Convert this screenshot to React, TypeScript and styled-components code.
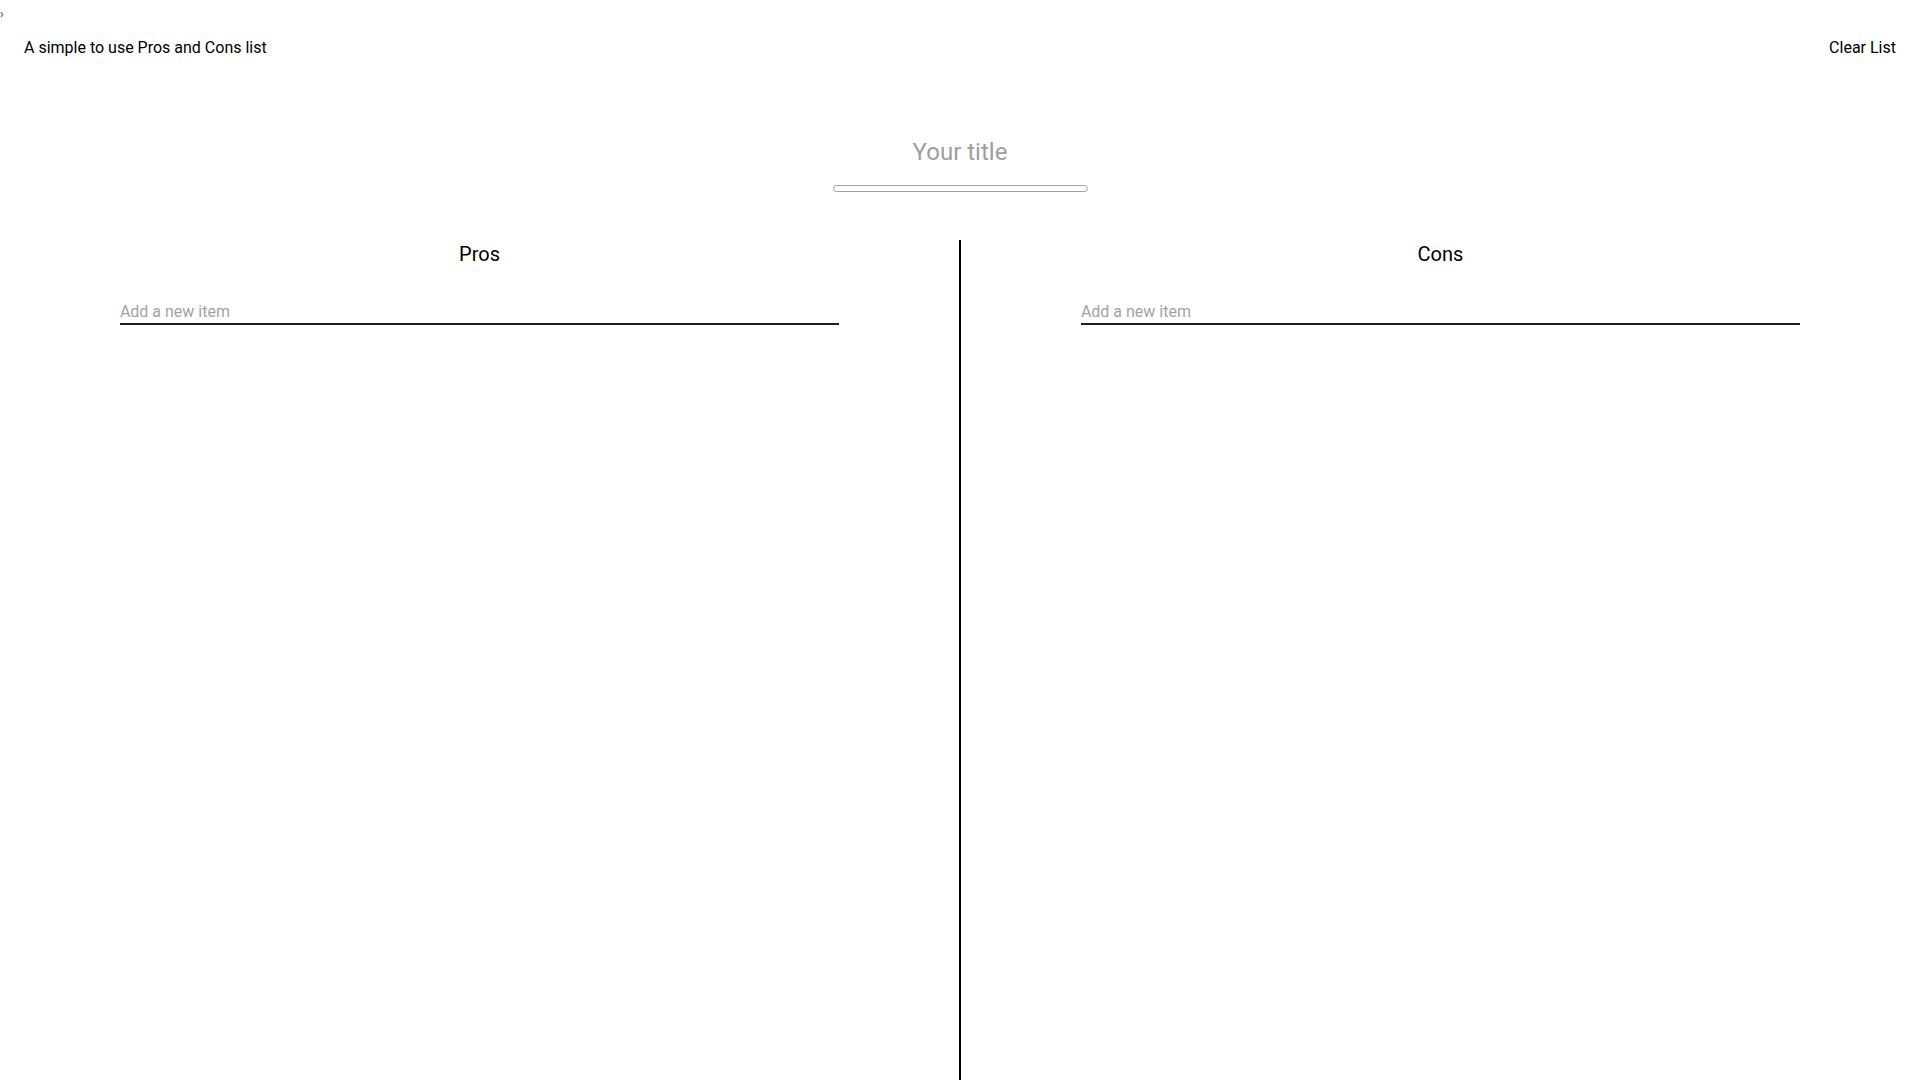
import React, { useState } from "react";
import styled, { createGlobalStyle } from "styled-components";

const GlobalStyle = createGlobalStyle`
  html, body {
    margin: 0;
    padding: 0;
    background: #ffffff;
    font-family: Roboto, "Liberation Sans", Arial, sans-serif;
    color: #000000;
  }
  * {
    box-sizing: border-box;
  }
`;

const Page = styled.div`
  display: flex;
  flex-direction: column;
  min-height: 100vh;
  overflow: hidden;
`;

const Chevron = styled.span`
  display: block;
  height: 16px;
  font-size: 12px;
  line-height: 28px;
  color: #333;
`;

const Header = styled.header`
  display: flex;
  justify-content: space-between;
  align-items: center;
  margin-top: 22px;
  padding: 0 24px;
  font-size: 16px;
  line-height: 20px;
`;

const HeaderButton = styled.button`
  border: none;
  background: none;
  padding: 0;
  font: inherit;
  color: #000;
  cursor: pointer;
`;

const TitleBlock = styled.div`
  display: flex;
  flex-direction: column;
  align-items: center;
  margin-top: 80px;
`;

const TitleInput = styled.input`
  width: 400px;
  height: 28px;
  border: none;
  outline: none;
  padding: 0;
  text-align: center;
  font-family: Roboto, "Liberation Sans", Arial, sans-serif;
  font-size: 24px;
  line-height: 28px;
  color: #000;
  background: transparent;

  &::placeholder {
    color: #9e9e9e;
  }
`;

const TitleBar = styled.div`
  width: 255px;
  height: 7px;
  margin-top: 19px;
  border: 1px solid #9ca1a6;
  border-radius: 4px;
`;

const Columns = styled.main`
  display: grid;
  grid-template-columns: 1fr 2px 1fr;
  margin-top: 48px;
  flex: 1;
  height: calc(100vh - 240px);
`;

const Divider = styled.div`
  background: #000;
`;

const Column = styled.section`
  display: flex;
  flex-direction: column;
  align-items: center;
`;

const ColumnTitle = styled.h2`
  margin: 2px 0 0;
  font-size: 20px;
  line-height: 24px;
  font-weight: 400;
`;

const ItemInput = styled.input`
  width: 75%;
  height: 25px;
  margin-top: 34px;
  padding: 0 0 1px;
  border: none;
  border-bottom: 2px solid #1f1f1f;
  outline: none;
  font-family: Roboto, "Liberation Sans", Arial, sans-serif;
  font-size: 16px;
  color: #000;
  background: transparent;

  &::placeholder {
    color: #a3a3a3;
  }
`;

const ListColumn = ({ title }: { title: string }) => {
  const [value, setValue] = useState("");
  return (
    <Column>
      <ColumnTitle>{title}</ColumnTitle>
      <ItemInput
        placeholder="Add a new item"
        value={value}
        onChange={(e) => setValue(e.target.value)}
      />
    </Column>
  );
};

const App = () => {
  const [title, setTitle] = useState("");

  return (
    <>
      <GlobalStyle />
      <Page>
        <Chevron>›</Chevron>
        <Header>
          <span>A simple to use Pros and Cons list</span>
          <HeaderButton>Clear List</HeaderButton>
        </Header>
        <TitleBlock>
          <TitleInput
            placeholder="Your title"
            value={title}
            onChange={(e) => setTitle(e.target.value)}
          />
          <TitleBar />
        </TitleBlock>
        <Columns>
          <ListColumn title="Pros" />
          <Divider />
          <ListColumn title="Cons" />
        </Columns>
      </Page>
    </>
  );
};

export default App;
